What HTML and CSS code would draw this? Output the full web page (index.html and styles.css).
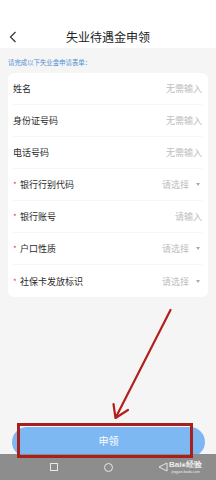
FILE: index.html
```html
<!DOCTYPE html>
<html lang="zh">
<head>
<meta charset="utf-8">
<link rel="stylesheet" href="styles.css">
</head>
<body>
<div class="page">
  <header class="topbar">
    <span class="back">
      <svg width="8" height="12" viewBox="0 0 8 12"><path d="M6.5 1 L1.5 6 L6.5 11" fill="none" stroke="#333" stroke-width="1.2"/></svg>
    </span>
    <h1 class="title">失业待遇金申领</h1>
  </header>
  <p class="hint">请完成以下失业金申请表单：</p>
  <div class="card">
    <div class="row"><span class="label">姓名</span><span class="value">无需输入</span></div>
    <div class="row"><span class="label">身份证号码</span><span class="value">无需输入</span></div>
    <div class="row"><span class="label">电话号码</span><span class="value">无需输入</span></div>
    <div class="row"><span class="label"><i class="req">*</i>银行行别代码</span><span class="value">请选择<b class="caret"></b></span></div>
    <div class="row"><span class="label"><i class="req">*</i>银行账号</span><span class="value">请输入</span></div>
    <div class="row"><span class="label"><i class="req">*</i>户口性质</span><span class="value">请选择<b class="caret"></b></span></div>
    <div class="row last"><span class="label"><i class="req">*</i>社保卡发放标识</span><span class="value">请选择<b class="caret"></b></span></div>
  </div>
  <div class="spacer"></div>
  <div class="btnwrap"><button class="submit">申领</button></div>
  <nav class="sysnav">
    <span class="navsq"></span>
    <span class="navci"></span>
    <span class="wm">
      <svg width="10" height="10" viewBox="0 0 10 10"><path d="M9 1 L1 5 L9 9 Z" fill="none" stroke="#e6e6e6" stroke-width="1"/></svg>
      <span class="wmtext"><span class="wmlogo">Bai<span class="paw">❀</span>经验</span><span class="wmurl">jingyan.baidu.com</span></span>
    </span>
  </nav>
  <svg class="annot" width="216" height="480" viewBox="0 0 216 480">
    <path d="M170.5 310 L116 417" stroke="#b3201b" stroke-width="2.2" stroke-linecap="round" fill="none"/>
    <path d="M113.5 404 L115.5 418 L128 410" stroke="#b3201b" stroke-width="2.2" stroke-linecap="round" stroke-linejoin="round" fill="none"/>
    <rect x="18.5" y="424.5" width="173" height="32" fill="none" stroke="#a8201d" stroke-width="3"/>
  </svg>
</div>
</body>
</html>
```
FILE: styles.css
```css
* { box-sizing: border-box; margin: 0; padding: 0; }
html, body { width: 216px; height: 480px; overflow: hidden; }
body {
  font-family: "Noto Sans CJK SC", "Noto Sans", sans-serif;
  background: #f5f5f5;
}
.page {
  position: relative;
  width: 216px;
  height: 480px;
  display: flex;
  flex-direction: column;
}
.topbar {
  background: #fff;
  height: 48px;
  padding-top: 26px;
  display: flex;
  align-items: flex-start;
  position: relative;
}
.back {
  display: flex;
  width: 8px;
  height: 12px;
  margin-left: 9px;
  margin-top: 5px;
}
.title {
  flex: 1;
  margin-right: 17px;
  text-align: center;
  font-size: 12px;
  line-height: 22px;
  font-weight: 400;
  color: #222;
}
.hint {
  font-size: 6.4px;
  line-height: 10px;
  color: #4e8fd3;
  padding: 10px 8px 5px;
}
.card {
  margin: 0 8px;
  background: #fff;
  border-radius: 6px;
  padding: 0 6px 0 5px;
}
.row {
  height: 32px;
  display: flex;
  align-items: center;
  justify-content: space-between;
  border-bottom: 1px solid #f6f6f6;
}
.row.last { border-bottom: none; }
.label {
  font-size: 9px;
  color: #2a2a2a;
  display: flex;
  align-items: center;
}
.req {
  font-style: normal;
  color: #e0443c;
  font-size: 8px;
  width: 7px;
  display: inline-block;
}
.value {
  font-size: 9px;
  color: #bdbdbd;
  display: flex;
  align-items: center;
}
.caret {
  display: inline-block;
  width: 0;
  height: 0;
  border-left: 2.5px solid transparent;
  border-right: 2.5px solid transparent;
  border-top: 3px solid #aaa;
  margin-left: 7px;
  margin-right: 2px;
}
.spacer { flex: 1; }
.btnwrap {
  padding: 0 11px 0 12px;
  height: 27px;
  overflow: hidden;
}
.submit {
  display: block;
  width: 100%;
  height: 30px;
  border: none;
  border-radius: 15px;
  background: #7db8f3;
  color: #fff;
  font-family: "Noto Sans CJK SC", sans-serif;
  font-size: 10px;
  line-height: 28px;
  padding-bottom: 2px;
}
.sysnav {
  height: 26px;
  background: #8d8d8d;
  display: flex;
  align-items: center;
  position: relative;
}
.navsq {
  width: 8px;
  height: 8px;
  border: 1px solid #e8e8e8;
  margin-left: 50px;
}
.navci {
  width: 9px;
  height: 9px;
  border: 1px solid #e8e8e8;
  border-radius: 50%;
  margin-left: 46px;
}
.wm {
  display: flex;
  align-items: center;
  margin-left: 45px;
  gap: 1px;
}
.wmtext {
  display: flex;
  flex-direction: column;
  align-items: center;
  color: #ececec;
}
.wmlogo {
  font-family: "Liberation Sans", sans-serif;
  font-size: 8px;
  line-height: 9px;
  font-weight: 700;
  white-space: nowrap;
}
.paw { font-size: 6px; font-weight: 400; }
.wmurl {
  font-family: "Liberation Sans", sans-serif;
  font-size: 3.5px;
  line-height: 4px;
  white-space: nowrap;
}
.annot {
  position: absolute;
  left: 0;
  top: 0;
  pointer-events: none;
}
```
